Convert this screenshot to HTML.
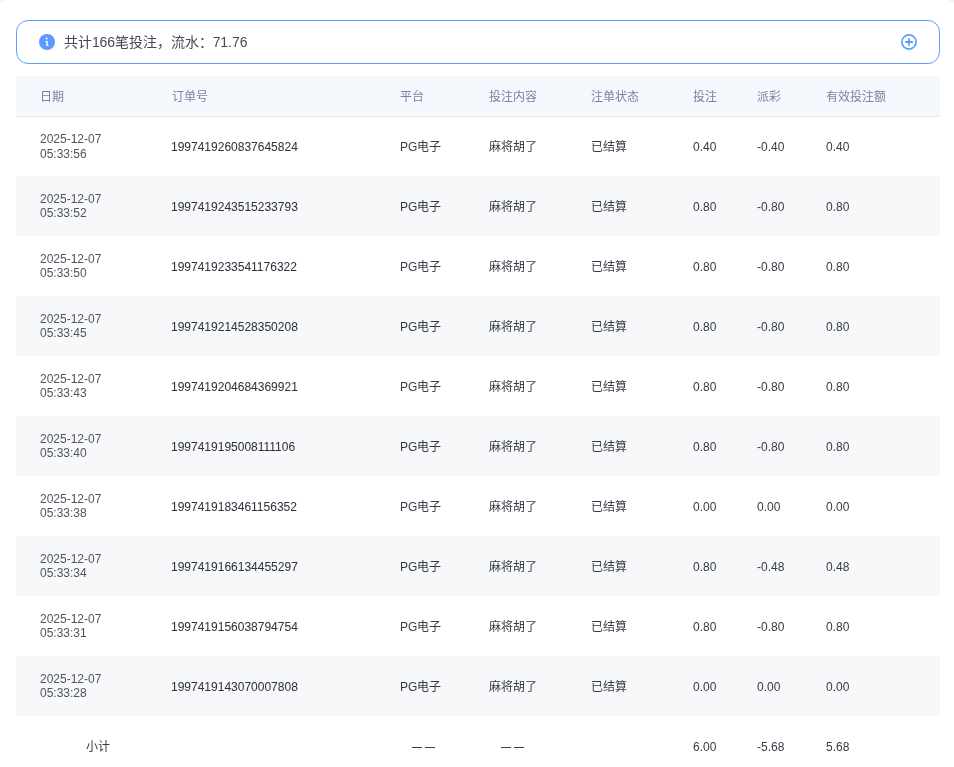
<!DOCTYPE html><html lang="zh-CN"><head><meta charset="utf-8"><style>
*{margin:0;padding:0;box-sizing:border-box}
html,body{width:954px;height:767px;overflow:hidden;background:#fff}
body{font-family:"Liberation Sans",sans-serif;position:relative}
.td,.dt,.th,.atext{will-change:transform}
.wrap{position:absolute;left:0;top:-1px;width:954px;height:900px;background:#fff;border-radius:18px / 5px}
.tint{position:absolute;left:0;top:0;width:954px;height:10px;background:#eef2fa}
.alert{position:absolute;left:16px;top:20px;width:924px;height:44px;border:1px solid #5d9cfd;border-radius:12px;background:#fff}
.ic{position:absolute;left:39px;top:34px;width:16px;height:16px}
.plus{position:absolute;left:901px;top:34px;width:16px;height:16px}
.atext{position:absolute;left:64px;top:33px;letter-spacing:-0.06px;font-size:14px;line-height:18px;color:#454955;white-space:nowrap}
.thead{position:absolute;left:16px;top:76px;width:924px;height:41px;background:#f5f8fd;border-bottom:1px solid #e4e7ef}
.th{position:absolute;top:89px;font-size:12px;line-height:16px;color:#7b81a1;white-space:nowrap}
.row{position:absolute;left:16px;width:924px;height:60px}
.row.g{background:#f7f8fa}
.td{position:absolute;font-size:12px;line-height:16px;color:#363a46;white-space:nowrap}
.on{-webkit-text-stroke:0.04px #2f333e;color:#2f333e;white-space:nowrap}
.dt{position:absolute;font-size:12px;line-height:14.5px;color:#50545f;white-space:nowrap}
.dash{position:absolute;height:1px;width:10px;background:#3a3e4a}
</style></head><body><div class="tint"></div><div class="wrap"></div>
<div class="alert"></div>
<svg class="ic" viewBox="0 0 16 16"><circle cx="8" cy="8" r="8" fill="#5b9bff"/><circle cx="7.6" cy="4.5" r="1.05" fill="#fff"/><path d="M6.5 7.1H8.7V11.2H9.7V12.1H7.3V8H6.5Z" fill="#fff"/></svg>
<div class="atext">共计166笔投注，流水：71.76</div>
<svg class="plus" viewBox="0 0 16 16"><circle cx="8" cy="8" r="7.1" fill="none" stroke="#5b9bff" stroke-width="1.7"/><path d="M8 4.2v7.6M4.2 8h7.6" stroke="#5b9bff" stroke-width="1.8"/></svg>
<div class="thead"></div>
<div class="th" style="left:40px">日期</div>
<div class="th" style="left:172px">订单号</div>
<div class="th" style="left:400px">平台</div>
<div class="th" style="left:489px">投注内容</div>
<div class="th" style="left:591px">注单状态</div>
<div class="th" style="left:693px">投注</div>
<div class="th" style="left:757px">派彩</div>
<div class="th" style="left:826px">有效投注额</div>
<div class="row" style="top:117px;height:59px"></div>
<div class="dt" style="left:40px;top:132px;line-height:15px">2025-12-07<br>05:33:56</div>
<div class="td on" style="left:171px;top:139px">1997419260837645824</div>
<div class="td" style="left:400px;top:139px">PG电子</div>
<div class="td" style="left:489px;top:139px">麻将胡了</div>
<div class="td" style="left:591px;top:139px">已结算</div>
<div class="td" style="left:693px;top:139px">0.40</div>
<div class="td" style="left:757px;top:139px">-0.40</div>
<div class="td" style="left:826px;top:139px">0.40</div>
<div class="row g" style="top:176px"></div>
<div class="dt" style="left:40px;top:192px;line-height:14px">2025-12-07<br>05:33:52</div>
<div class="td on" style="left:171px;top:199px">1997419243515233793</div>
<div class="td" style="left:400px;top:199px">PG电子</div>
<div class="td" style="left:489px;top:199px">麻将胡了</div>
<div class="td" style="left:591px;top:199px">已结算</div>
<div class="td" style="left:693px;top:199px">0.80</div>
<div class="td" style="left:757px;top:199px">-0.80</div>
<div class="td" style="left:826px;top:199px">0.80</div>
<div class="row" style="top:236px"></div>
<div class="dt" style="left:40px;top:252px;line-height:14px">2025-12-07<br>05:33:50</div>
<div class="td on" style="left:171px;top:259px">1997419233541176322</div>
<div class="td" style="left:400px;top:259px">PG电子</div>
<div class="td" style="left:489px;top:259px">麻将胡了</div>
<div class="td" style="left:591px;top:259px">已结算</div>
<div class="td" style="left:693px;top:259px">0.80</div>
<div class="td" style="left:757px;top:259px">-0.80</div>
<div class="td" style="left:826px;top:259px">0.80</div>
<div class="row g" style="top:296px"></div>
<div class="dt" style="left:40px;top:312px;line-height:14px">2025-12-07<br>05:33:45</div>
<div class="td on" style="left:171px;top:319px">1997419214528350208</div>
<div class="td" style="left:400px;top:319px">PG电子</div>
<div class="td" style="left:489px;top:319px">麻将胡了</div>
<div class="td" style="left:591px;top:319px">已结算</div>
<div class="td" style="left:693px;top:319px">0.80</div>
<div class="td" style="left:757px;top:319px">-0.80</div>
<div class="td" style="left:826px;top:319px">0.80</div>
<div class="row" style="top:356px"></div>
<div class="dt" style="left:40px;top:372px;line-height:14px">2025-12-07<br>05:33:43</div>
<div class="td on" style="left:171px;top:379px">1997419204684369921</div>
<div class="td" style="left:400px;top:379px">PG电子</div>
<div class="td" style="left:489px;top:379px">麻将胡了</div>
<div class="td" style="left:591px;top:379px">已结算</div>
<div class="td" style="left:693px;top:379px">0.80</div>
<div class="td" style="left:757px;top:379px">-0.80</div>
<div class="td" style="left:826px;top:379px">0.80</div>
<div class="row g" style="top:416px"></div>
<div class="dt" style="left:40px;top:432px;line-height:14px">2025-12-07<br>05:33:40</div>
<div class="td on" style="left:171px;top:439px">1997419195008111106</div>
<div class="td" style="left:400px;top:439px">PG电子</div>
<div class="td" style="left:489px;top:439px">麻将胡了</div>
<div class="td" style="left:591px;top:439px">已结算</div>
<div class="td" style="left:693px;top:439px">0.80</div>
<div class="td" style="left:757px;top:439px">-0.80</div>
<div class="td" style="left:826px;top:439px">0.80</div>
<div class="row" style="top:476px"></div>
<div class="dt" style="left:40px;top:492px;line-height:14px">2025-12-07<br>05:33:38</div>
<div class="td on" style="left:171px;top:499px">1997419183461156352</div>
<div class="td" style="left:400px;top:499px">PG电子</div>
<div class="td" style="left:489px;top:499px">麻将胡了</div>
<div class="td" style="left:591px;top:499px">已结算</div>
<div class="td" style="left:693px;top:499px">0.00</div>
<div class="td" style="left:757px;top:499px">0.00</div>
<div class="td" style="left:826px;top:499px">0.00</div>
<div class="row g" style="top:536px"></div>
<div class="dt" style="left:40px;top:552px;line-height:14px">2025-12-07<br>05:33:34</div>
<div class="td on" style="left:171px;top:559px">1997419166134455297</div>
<div class="td" style="left:400px;top:559px">PG电子</div>
<div class="td" style="left:489px;top:559px">麻将胡了</div>
<div class="td" style="left:591px;top:559px">已结算</div>
<div class="td" style="left:693px;top:559px">0.80</div>
<div class="td" style="left:757px;top:559px">-0.48</div>
<div class="td" style="left:826px;top:559px">0.48</div>
<div class="row" style="top:596px"></div>
<div class="dt" style="left:40px;top:612px;line-height:14px">2025-12-07<br>05:33:31</div>
<div class="td on" style="left:171px;top:619px">1997419156038794754</div>
<div class="td" style="left:400px;top:619px">PG电子</div>
<div class="td" style="left:489px;top:619px">麻将胡了</div>
<div class="td" style="left:591px;top:619px">已结算</div>
<div class="td" style="left:693px;top:619px">0.80</div>
<div class="td" style="left:757px;top:619px">-0.80</div>
<div class="td" style="left:826px;top:619px">0.80</div>
<div class="row g" style="top:656px"></div>
<div class="dt" style="left:40px;top:672px;line-height:14px">2025-12-07<br>05:33:28</div>
<div class="td on" style="left:171px;top:679px">1997419143070007808</div>
<div class="td" style="left:400px;top:679px">PG电子</div>
<div class="td" style="left:489px;top:679px">麻将胡了</div>
<div class="td" style="left:591px;top:679px">已结算</div>
<div class="td" style="left:693px;top:679px">0.00</div>
<div class="td" style="left:757px;top:679px">0.00</div>
<div class="td" style="left:826px;top:679px">0.00</div>
<div class="td" style="left:86px;top:739px">小计</div>
<div class="dash" style="left:412px;top:747px"></div>
<div class="dash" style="left:425px;top:747px"></div>
<div class="dash" style="left:501px;top:747px"></div>
<div class="dash" style="left:514px;top:747px"></div>
<div class="td" style="left:693px;top:739px">6.00</div>
<div class="td" style="left:757px;top:739px">-5.68</div>
<div class="td" style="left:826px;top:739px">5.68</div>
</body></html>
